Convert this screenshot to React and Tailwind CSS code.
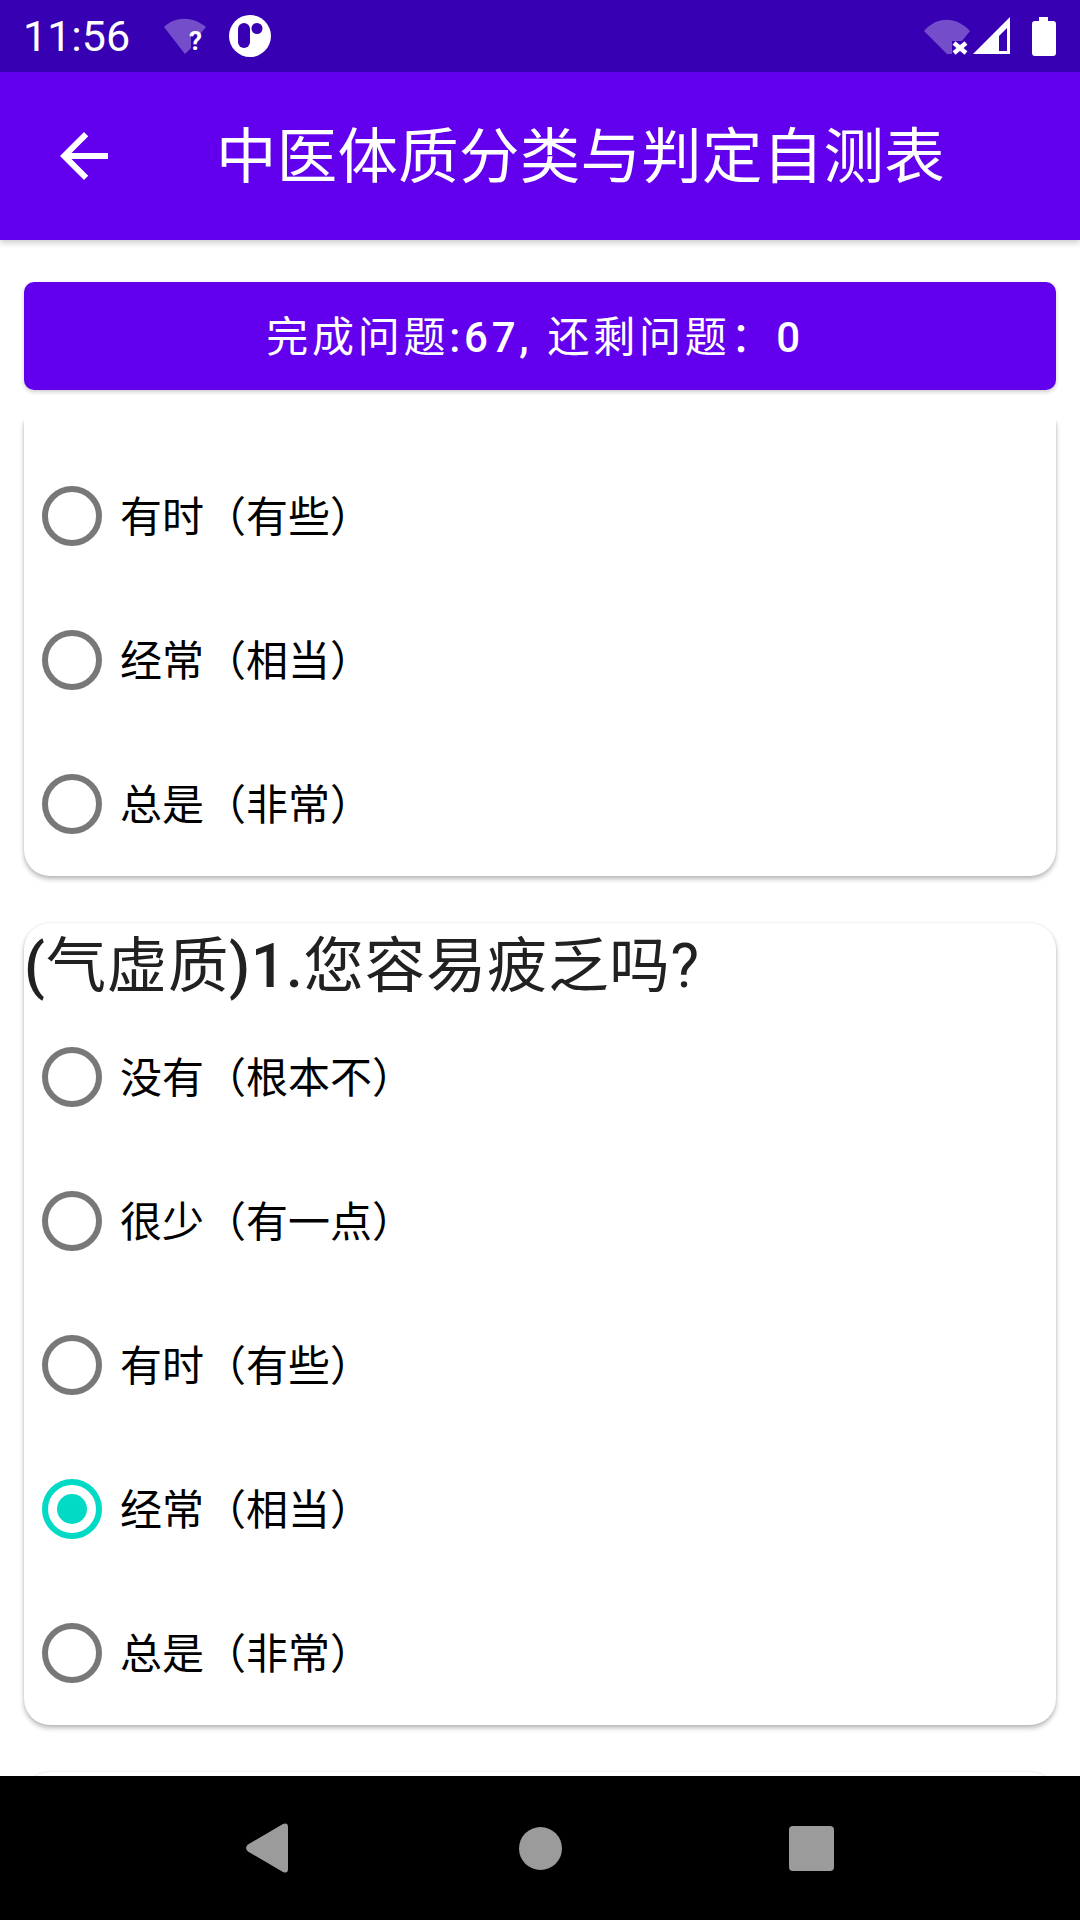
import React from "react";

const font = "font-['Roboto','Noto_Sans_CJK_SC',sans-serif]";

function WifiQuestion() {
  return (
    <div className="relative w-[44px] h-[38px] ml-[33px]">
      <svg width="44" height="38" viewBox="0 0 44 38">
        <path
          d="M1 10 C12 -1 30 -1 43 10 L38 16 H28 V31 L22 37 Z"
          fill="#fff"
          fillOpacity="0.3"
        />
      </svg>
      <span className="absolute right-[5px] bottom-[1px] text-[26px] leading-none font-bold font-['Roboto',sans-serif]">?</span>
    </div>
  );
}

function AppLogo() {
  return (
    <svg width="42" height="42" viewBox="0 0 42 42" className="ml-[22px]">
      <circle cx="21" cy="21" r="21" fill="#fff" />
      <rect x="9" y="8" width="12" height="25" rx="6" fill="#3700B3" />
      <circle cx="28" cy="13.5" r="5.5" fill="#3700B3" />
    </svg>
  );
}

function WifiOff() {
  return (
    <svg width="46" height="38" viewBox="0 0 46 38">
      <path
        d="M0 14 C13 -1 32 -1 46 14 L38 24 H28 V37 H23 Z"
        fill="#fff"
        fillOpacity="0.3"
      />
      <path d="M30 26 L42 36 M42 26 L30 36" stroke="#fff" strokeWidth="4.5" />
    </svg>
  );
}

function Signal() {
  return (
    <svg width="38" height="38" viewBox="0 0 38 38" className="ml-[3px]">
      <path d="M0 37 L37 0 V37 Z" fill="#fff" />
      <path d="M26 19 L34 11 V34 H26 Z" fill="#3700B3" />
    </svg>
  );
}

function Battery() {
  return (
    <svg width="24" height="39" viewBox="0 0 24 39" className="ml-[21px]">
      <path d="M7 0 H16 V4 H21 Q24 4 24 7 V36 Q24 39 21 39 H3 Q0 39 0 36 V7 Q0 4 3 4 H7 Z" fill="#fff" />
    </svg>
  );
}

function StatusBar() {
  return (
    <div className="h-[72px] bg-[#3700B3] flex items-center pl-[23px] pr-[24px] text-white">
      <span className="w-[107px] text-[43px] leading-none font-['Roboto',sans-serif]">11:56</span>
      <WifiQuestion />
      <AppLogo />
      <div className="flex-1" />
      <WifiOff />
      <Signal />
      <Battery />
    </div>
  );
}

function AppBar() {
  return (
    <div className="h-[168px] bg-[#6200EE] flex items-center pl-[48px] shadow-[0_3px_6px_rgba(0,0,0,0.2)] relative z-10">
      <svg width="72" height="72" viewBox="0 0 24 24" fill="#fff">
        <path d="M20 11H7.83l5.59-5.59L12 4l-8 8 8 8 1.41-1.41L7.83 13H20v-2z" />
      </svg>
      <h1 className="ml-[96px] pt-[4px] text-[60.4px] leading-none tracking-[0.35px] font-normal text-white whitespace-nowrap">
        中医体质分类与判定自测表
      </h1>
    </div>
  );
}

function Radio({ checked }) {
  if (checked) {
    return (
      <div className="w-[60px] h-[60px] rounded-full border-[6px] border-[#03DAC5] flex items-center justify-center">
        <div className="w-[30px] h-[30px] rounded-full bg-[#03DAC5]" />
      </div>
    );
  }
  return <div className="w-[60px] h-[60px] rounded-full border-[6px] border-[#787878]" />;
}

function Option({ label, checked }) {
  return (
    <div className="h-[144px] flex items-center pl-[18px]">
      <Radio checked={checked} />
      <span className="ml-[18px] pt-[3px] text-[42px] leading-none text-black whitespace-nowrap">{label}</span>
    </div>
  );
}

const cardClass =
  "mx-[24px] bg-white shadow-[0_3px_5px_rgba(0,0,0,0.28),0_0_2px_rgba(0,0,0,0.1)]";

export default function App() {
  return (
    <div className={`w-[1080px] h-[1920px] bg-white flex flex-col overflow-hidden ${font}`}>
      <StatusBar />
      <AppBar />

      <div className="px-[24px] pt-[42px] pb-[30px]">
        <div className="h-[108px] pt-[4px] pr-[10px] rounded-[10px] bg-[#6200EE] shadow-[0_2px_4px_rgba(0,0,0,0.2)] flex items-center justify-center text-[42px] leading-none tracking-[0.0892em] text-white whitespace-pre">
          <span>完成问题</span>
          <span className="font-medium">:67,</span>
          <span className="ml-[15px]">还剩问题：</span>
          <span className="font-medium">0</span>
        </div>
      </div>

      <div className="flex-1 overflow-hidden">
        <div className={`${cardClass} pt-[24px] rounded-b-[26px]`}>
          <Option label="有时（有些）" />
          <Option label="经常（相当）" />
          <Option label="总是（非常）" />
        </div>

        <div className={`${cardClass} mt-[47px] rounded-[26px]`}>
          <div className="h-[82px] pt-[6px] flex items-center text-[60.4px] leading-none tracking-[0.0125em] text-[#212121] whitespace-nowrap">
            <span className="font-medium">(</span>
            <span>气虚质</span>
            <span className="font-medium">)1.</span>
            <span>您容易疲乏吗?</span>
          </div>
          <Option label="没有（根本不）" />
          <Option label="很少（有一点）" />
          <Option label="有时（有些）" />
          <Option label="经常（相当）" checked />
          <Option label="总是（非常）" />
        </div>

        {/* next card, only its top edge is showing */}
        <div className={`${cardClass} mt-[47px] h-[200px] rounded-[26px]`} />
      </div>

      <div className="h-[144px] bg-black flex items-center relative">
        <svg width="44" height="50" viewBox="0 0 44 50" className="ml-[245px]">
          <path d="M3 21.5 L38 1 Q43 -1 43 4 V46 Q43 51 38 49 L3 28.5 Q-1 25 3 21.5 Z" fill="#9b9b9b" />
        </svg>
        <div className="ml-[230px] w-[43px] h-[43px] rounded-full bg-[#9b9b9b]" />
        <div className="ml-[227px] w-[45px] h-[45px] rounded-[4px] bg-[#9b9b9b]" />
      </div>
    </div>
  );
}
